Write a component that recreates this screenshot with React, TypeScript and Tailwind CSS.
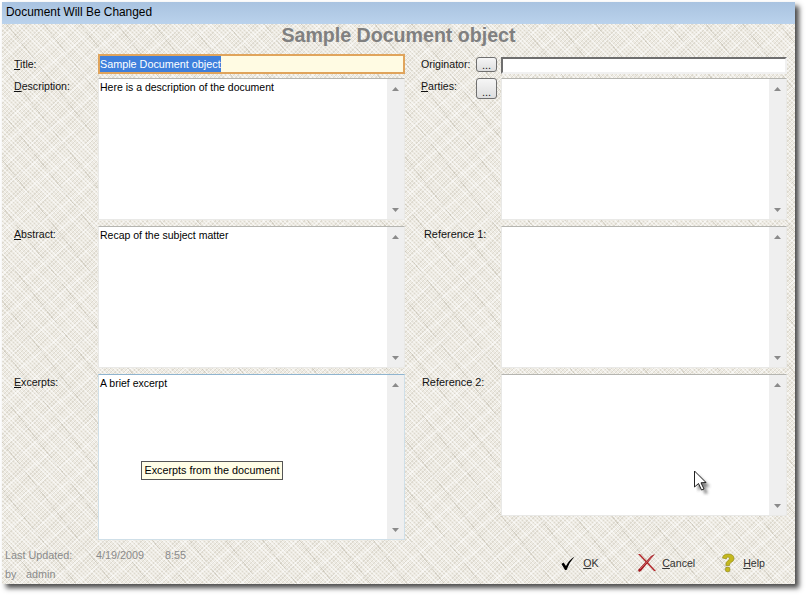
import React from 'react';

const texture =
  'bg-[#edeae2] bg-[repeating-linear-gradient(45deg,rgba(255,255,255,0.55)_0px,rgba(255,255,255,0.55)_1px,transparent_1px,transparent_3px),repeating-linear-gradient(-45deg,rgba(165,158,138,0.22)_0px,rgba(165,158,138,0.22)_1px,transparent_1px,transparent_3px),repeating-linear-gradient(52deg,rgba(140,132,110,0.2)_0px,rgba(140,132,110,0.2)_1px,transparent_1px,transparent_29px),repeating-linear-gradient(-38deg,rgba(255,255,255,0.35)_0px,rgba(255,255,255,0.35)_2px,transparent_2px,transparent_17px)]';

function Label({ hot, rest, className = '' }: { hot?: string; rest: string; className?: string }) {
  return (
    <span className={`text-[10.6px] leading-[13px] text-[#111] ${className}`}>
      {hot && <span className="underline">{hot}</span>}
      {rest}
    </span>
  );
}

function Arrow({ up }: { up?: boolean }) {
  return (
    <svg width="7" height="4" viewBox="0 0 7 4" className="block">
      <path d={up ? 'M3.5 0L7 4H0Z' : 'M0 0H7L3.5 4Z'} fill="#8a8a8a" />
    </svg>
  );
}

function Memo({ text, className = '', focused }: { text?: string; className?: string; focused?: boolean }) {
  return (
    <div
      className={`flex bg-white border ${focused ? 'border-[#cfdfe8] border-t-[#8fb4cf]' : 'border-[#e9e9e7] border-t-[#b5b5b0]'} ${className}`}
    >
      <div className="flex-1 px-[1px] py-[1px] text-[10.5px] leading-[14px] text-black">{text}</div>
      <div className="w-[17px] bg-[#efefef] flex flex-col items-center justify-between pt-[8px] pb-[7px]">
        <Arrow up />
        <Arrow />
      </div>
    </div>
  );
}

function DotsButton({ className = '' }: { className?: string }) {
  return (
    <div
      className={`w-[21px] flex items-end justify-center bg-gradient-to-b from-[#f6f6f6] to-[#dedede] border border-[#6f6f6f] rounded-[3px] text-[11px] leading-[12px] text-[#222] ${className}`}
    >
      ...
    </div>
  );
}

function Cursor() {
  return (
    <svg width="26" height="30" viewBox="0 0 26 30" className="absolute left-[693px] top-[469px]">
      <defs>
        <filter id="cursor-blur">
          <feGaussianBlur stdDeviation="1.5" />
        </filter>
      </defs>
      <path d="M5 6 L5 22 L9 18.5 L12 25 L15 24 L12 18 L17 17.5 Z" fill="#333" opacity="0.6" filter="url(#cursor-blur)" />
      <path d="M1.5 2 L1.5 18 L5.5 14.5 L8.5 21 L11 20 L8 13.8 L13 13.5 Z" fill="#fff" stroke="#222" strokeWidth="1" />
    </svg>
  );
}

function ActionIcon({ kind }: { kind: 'ok' | 'cancel' | 'help' }) {
  if (kind === 'ok') {
    return (
      <svg width="16" height="16" viewBox="0 0 16 16">
        <path d="M1.5 9 L3.5 7.5 L6 11 Q9 5 14.5 1.5 Q9.5 7 6.5 15 L5 15 Z" fill="#000" />
      </svg>
    );
  }
  if (kind === 'cancel') {
    return (
      <svg width="20" height="20" viewBox="0 0 20 20">
        <path d="M1 1 L3 1 L19 18 L17 18 Z" fill="#b3262a" />
        <path d="M18 1 L14 3 L1 17 L2 19 L4 18 Z" fill="#a31a20" />
        <path d="M3 16 L15 3.5" stroke="#e8a0a0" strokeWidth="0.6" />
      </svg>
    );
  }
  return (
    <svg width="14" height="20" viewBox="0 0 14 20">
      <path
        d="M1.5 5 Q2 1 7 1 Q13 1 13 5.5 Q13 8 10 9.5 Q8.5 10.5 8.5 12.5 L4.8 12.5 Q4.5 9 7 7.5 Q8.8 6.3 8.4 5 Q7.8 3.8 6.5 4.2 Q5.3 4.6 5.2 6 Z"
        fill="#c4b81e"
        stroke="#8a8212"
        strokeWidth="0.6"
      />
      <circle cx="6.7" cy="16.5" r="2.4" fill="#c4b81e" stroke="#8a8212" strokeWidth="0.6" />
    </svg>
  );
}

function Action({ kind, hot, rest, className = '' }: { kind: 'ok' | 'cancel' | 'help'; hot: string; rest: string; className?: string }) {
  return (
    <div className={`flex items-center ${className}`}>
      <ActionIcon kind={kind} />
      <Label hot={hot} rest={rest} className="text-[#333]" />
    </div>
  );
}

export default function App() {
  return (
    <div className="relative w-[809px] h-[599px] bg-white pl-[2px] pt-[2px] [font-family:'Liberation_Sans',Arial,sans-serif]">
      <div className={`w-[793px] h-[582px] flex flex-col shadow-[4px_4px_5px_rgba(30,30,30,0.8)] ${texture}`}>
        <div className="h-[22px] shrink-0 flex items-center pl-[4px] text-[11.9px] text-black bg-gradient-to-b from-[#a9c3e0] to-[#bad2ec]">
          Document Will Be Changed
        </div>

        <div className="h-[30px] shrink-0 pb-[6px] flex items-center justify-center text-[19.6px] font-bold text-[#808080] leading-none">
          Sample Document object
        </div>

        <div className="flex pl-[12px]">
          {/* left column */}
          <div className="w-[391px] flex flex-col">
            <div className="flex h-[24px]">
              <Label hot="T" rest="itle:" className="w-[84px] pt-[4px]" />
              <div className="w-[307px] h-[20px] border-2 border-[#e0a45c] bg-[#fffbe3] text-[10.8px] leading-[16px] flex">
                <span className="bg-[#3e7fdc] text-white">Sample Document object</span>
              </div>
            </div>
            <div className="flex h-[148px]">
              <Label hot="D" rest="escription:" className="w-[84px] pt-[2px]" />
              <Memo text="Here is a description of the document" className="w-[307px] h-[142px]" />
            </div>
            <div className="flex h-[148px]">
              <Label hot="A" rest="bstract:" className="w-[84px] pt-[2px]" />
              <Memo text="Recap of the subject matter" className="w-[307px] h-[142px]" />
            </div>
            <div className="flex">
              <Label hot="E" rest="xcerpts:" className="w-[84px] pt-[2px]" />
              <Memo text="A brief excerpt" className="w-[307px] h-[166px]" focused />
            </div>
          </div>

          {/* right column */}
          <div className="w-[366px] ml-[16px] flex flex-col">
            <div className="flex h-[24px] pt-[3px]">
              <Label rest="Originator:" hot="" className="w-[55px] pt-[1px]" />
              <DotsButton className="h-[15px]" />
              <div className="ml-[4px] w-[286px] h-[17px] bg-white border-2 border-[#f1f1f1] border-t-[#6e6e6e] border-l-[#6e6e6e]" />
            </div>
            <div className="flex h-[148px]">
              <Label hot="P" rest="arties:" className="w-[55px] pt-[2px]" />
              <DotsButton className="h-[21px]" />
              <Memo className="ml-[4px] w-[286px] h-[142px]" />
            </div>
            <div className="flex h-[148px]">
              <Label rest="Reference 1:" className="w-[80px] pl-[3px] pt-[2px] text-[10.9px]" />
              <Memo className="w-[286px] h-[142px]" />
            </div>
            <div className="flex">
              <Label rest="Reference 2:" className="w-[80px] pl-[1px] pt-[2px] text-[10.9px]" />
              <Memo className="w-[286px] h-[142px]" />
            </div>
          </div>
        </div>

        <div className="flex-1 flex items-start justify-between pl-[3px]">
          <div className="flex flex-col pt-[6px] text-[10.8px] leading-[19px] text-[#8a8a8a]">
            <div className="flex">
              <span className="w-[91px]">Last Updated:</span>
              <span className="w-[69px]">4/19/2009</span>
              <span>8:55</span>
            </div>
            <div className="flex">
              <span className="w-[21px]">by</span>
              <span>admin</span>
            </div>
          </div>
          <div className="flex items-center pt-[13px] pr-[30px]">
            <Action kind="ok" hot="O" rest="K" className="w-[77px] gap-[7px]" />
            <Action kind="cancel" hot="C" rest="ancel" className="w-[84px] gap-[5px]" />
            <Action kind="help" hot="H" rest="elp" className="gap-[8px]" />
          </div>
        </div>
      </div>

      <div className="absolute left-[141px] top-[461px] h-[19px] w-[142px] flex items-center justify-center bg-[#fffde6] border border-[#555] text-[10.8px] text-black whitespace-nowrap">
        Excerpts from the document
      </div>
      <Cursor />
    </div>
  );
}
